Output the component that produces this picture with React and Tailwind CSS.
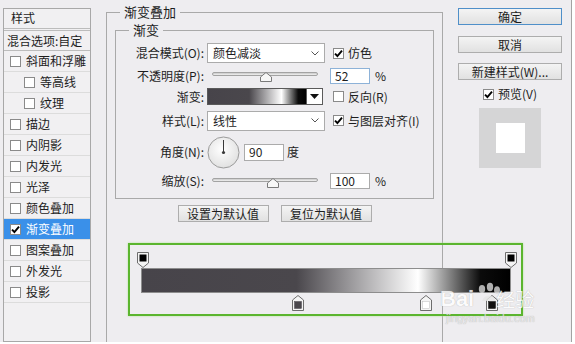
import React from "react";

const styleRows = [
  { name: "斜面和浮雕" },
  { name: "等高线", sub: true },
  { name: "纹理", sub: true },
  { name: "描边" },
  { name: "内阴影" },
  { name: "内发光" },
  { name: "光泽" },
  { name: "颜色叠加" },
  { name: "渐变叠加", checked: true, active: true },
  { name: "图案叠加" },
  { name: "外发光" },
  { name: "投影" },
];

const gradientBg =
  "bg-[linear-gradient(to_right,#47444a_0%,#4a474c_42%,#ffffff_75%,#0b0b0b_92%,#000000_100%)]";

function Box({ checked = false }) {
  return (
    <span className="inline-flex h-[11px] w-[11px] shrink-0 items-center justify-center border border-[#8a8a8a] bg-white">
      {checked && (
        <svg width="9" height="9" viewBox="0 0 9 9">
          <path d="M1 4.6 L3.4 7 L8 1.6" fill="none" stroke="#000" strokeWidth="1.9" />
        </svg>
      )}
    </span>
  );
}

function Check({ checked, label, className = "" }) {
  return (
    <div className={`flex items-center gap-[4px] whitespace-nowrap ${className}`}>
      <Box checked={checked} />
      <span className="leading-[14px]">{label}</span>
    </div>
  );
}

function Btn({ children, className = "", primary = false }) {
  return (
    <div
      className={`flex h-[17px] shrink-0 items-center justify-center whitespace-nowrap border bg-[linear-gradient(#f4f4f4,#e1e1e1)] leading-[15px] ${
        primary ? "border-[#4f8fc9]" : "border-[#adadad]"
      } ${className}`}
    >
      {children}
    </div>
  );
}

function Select({ value }) {
  return (
    <div className="flex h-[20px] w-[118px] shrink-0 items-center justify-between border border-[#ababab] bg-white pl-[5px] pr-[5px]">
      <span className="leading-[14px]">{value}</span>
      <svg width="8" height="5" viewBox="0 0 8 5">
        <path d="M0.5 0.5 L4 4 L7.5 0.5" fill="none" stroke="#555" strokeWidth="1" />
      </svg>
    </div>
  );
}

function Slider({ pos }) {
  return (
    <div className="relative h-[17px] w-[118px] shrink-0">
      <div className="ml-[5px] mt-[5px] h-[4px] w-[106px] rounded-full border border-[#a3a3a3] bg-[linear-gradient(#c9c9c9,#f2f2f2)]" />
      <svg className="absolute top-[5px]" style={{ left: pos - 6 }} width="12" height="10" viewBox="0 0 12 10">
        <path d="M6 0.5 L11.5 5 L11.5 9.5 L0.5 9.5 L0.5 5 Z" fill="#f7f7f7" stroke="#7a7a7a" strokeWidth="1" />
      </svg>
    </div>
  );
}

function Field({ value, focused = false, h = "h-[16px]" }) {
  return (
    <div
      className={`flex ${h} w-[40px] items-center border bg-white pl-[4px] leading-[14px] ${
        focused ? "border-[#8db2d8]" : "border-[#ababab]"
      }`}
    >
      {value}
    </div>
  );
}

function Row({ label, h, className = "", children }) {
  return (
    <div className={`flex items-center whitespace-nowrap ${h} ${className}`}>
      <div className="w-[88px] shrink-0 text-right leading-[14px]">{label}</div>
      <div className="ml-[3px] flex items-center">{children}</div>
    </div>
  );
}

function Stop({ left, top, down = false, color = "#000" }) {
  return (
    <svg className="absolute" style={{ left, top }} width="12" height="16" viewBox="0 0 12 16">
      {down ? (
        <>
          <path d="M0.5 0.5 H11.5 V11 L6 15.5 L0.5 11 Z" fill="#f4f4f4" stroke="#6d6d6d" />
          <rect x="2.5" y="2.5" width="7" height="7" fill={color} />
        </>
      ) : (
        <>
          <path d="M6 0.5 L11.5 5 V15.5 H0.5 V5 Z" fill="#f4f4f4" stroke="#6d6d6d" />
          <rect x="2.5" y="6.5" width="7" height="7" fill={color} stroke={color === "#fff" ? "#bbb" : color} strokeWidth="0.5" />
        </>
      )}
    </svg>
  );
}

export default function App() {
  return (
    <div className="relative h-[344px] w-[575px] overflow-hidden bg-white font-['Noto_Sans_CJK_SC',sans-serif] text-[12px] text-[#1d1d1d]">
      <div className="flex h-[342px] w-[572px] border-r border-[#a3a3a3] bg-[#eeedf0]">
        {/* style list */}
        <div className="ml-[3px] mt-[8px] flex h-[334px] w-[88px] shrink-0 flex-col whitespace-nowrap border border-[#a8a8a8] bg-[#f1f0f2]">
          <div className="h-[20px] border-b border-[#bcbcbc] pl-[7px] leading-[18px]">样式</div>
          <div className="mt-[1px] h-[21px] border-y border-[#bcbcbc] pl-[3px] leading-[19px]">混合选项:自定</div>
          {styleRows.map((r) => (
            <div
              key={r.name}
              className={`flex h-[21px] items-center gap-[5px] border-b border-[#dcdcdc] ${r.sub ? "pl-[20px]" : "pl-[6px]"} ${
                r.active ? "bg-[#3a90e9] text-white" : ""
              }`}
            >
              <Box checked={r.checked} />
              <span className="leading-[14px]">{r.name}</span>
            </div>
          ))}
        </div>

        {/* main settings */}
        <div className="ml-[15px] flex shrink-0 flex-col">
          <fieldset className="mt-[4px] h-[338px] w-[337px] min-w-0 border border-b-0 border-[#a9a9a9]">
            <legend className="ml-[13px] px-[4px] text-[13px] leading-[16px]">渐变叠加</legend>
            <fieldset className="ml-[8px] mt-[2px] w-[319px] min-w-0 border border-[#a9a9a9] pb-[9px] pt-[5px]">
              <legend className="ml-[13px] px-[4px] text-[13px] leading-[16px]">渐变</legend>
              <Row label="混合模式(O):" h="h-[20px]">
                <Select value="颜色减淡" />
                <Check checked label="仿色" className="ml-[8px]" />
              </Row>
              <Row label="不透明度(P):" h="h-[17px]" className="mt-[4px]">
                <Slider pos={59} />
                <div className="ml-[5px]">
                  <Field value="52" focused />
                </div>
                <span className="ml-[5px] leading-[14px]">%</span>
              </Row>
              <Row label="渐变:" h="h-[17px]" className="mt-[4px]">
                <div className={`h-[17px] w-[100px] shrink-0 border border-[#5a5a5a] ${gradientBg}`} />
                <div className="flex h-[17px] w-[16px] shrink-0 items-center justify-center border border-l-0 border-[#5a5a5a] bg-white">
                  <svg width="9" height="5" viewBox="0 0 9 5">
                    <path d="M0 0 H9 L4.5 5 Z" fill="#111" />
                  </svg>
                </div>
                <Check label="反向(R)" className="ml-[10px]" />
              </Row>
              <Row label="样式(L):" h="h-[21px]" className="mt-[5px]">
                <Select value="线性" />
                <Check checked label="与图层对齐(I)" className="ml-[8px]" />
              </Row>
              <Row label="角度(N):" h="h-[32px]" className="mt-[5px]">
                <svg width="33" height="33" viewBox="0 0 33 33">
                  <defs>
                    <radialGradient id="dial" cx="0.45" cy="0.4" r="0.7">
                      <stop offset="0" stopColor="#ffffff" />
                      <stop offset="1" stopColor="#dcdcdc" />
                    </radialGradient>
                  </defs>
                  <circle cx="16.5" cy="16.5" r="15.5" fill="url(#dial)" stroke="#9b9b9b" />
                  <line x1="16.5" y1="16.5" x2="16.5" y2="4" stroke="#3a3a3a" strokeWidth="1" />
                  <circle cx="16.5" cy="16.5" r="1.6" fill="#3a3a3a" />
                </svg>
                <div className="ml-[4px]">
                  <Field value="90" h="h-[17px]" />
                </div>
                <span className="ml-[3px] leading-[14px]">度</span>
              </Row>
              <Row label="缩放(S):" h="h-[16px]" className="mt-[5px]">
                <Slider pos={66} />
                <div className="ml-[5px]">
                  <Field value="100" />
                </div>
                <span className="ml-[5px] leading-[14px]">%</span>
              </Row>
            </fieldset>

            <div className="mt-[6px] flex justify-center gap-[12px]">
              <Btn className="w-[91px]">设置为默认值</Btn>
              <Btn className="w-[91px]">复位为默认值</Btn>
            </div>

            <div className="ml-[21px] mt-[21px] h-[73px] w-[395px] border-2 border-[#5bb52f] pl-[11px] shadow-[0_0_2px_#b5e39a]">
              <div className={`relative mt-[23px] h-[25px] w-[370px] border border-[#8d8d8d] ${gradientBg}`}>
                <Stop left={-5} top={-17} down />
                <Stop left={363} top={-17} down />
                <Stop left={150} top={26} color="#4a474c" />
                <Stop left={278} top={26} color="#fff" />
                <Stop left={344} top={26} color="#111" />
              </div>
            </div>
          </fieldset>
        </div>

        {/* buttons */}
        <div className="ml-[15px] mt-[8px] flex w-[104px] shrink-0 flex-col">
          <Btn primary>确定</Btn>
          <Btn className="mt-[11px]">取消</Btn>
          <Btn className="mt-[10px]">新建样式(W)...</Btn>
          <Check checked label="预览(V)" className="mt-[6px] h-[16px] justify-center" />
          <div className="ml-[21px] mt-[6px] flex h-[60px] w-[62px] items-center justify-center bg-[#d5d5d6]">
            <div className="h-[30px] w-[29px] bg-white" />
          </div>
        </div>
      </div>

      {/* site watermark */}
      <div className="pointer-events-none absolute left-[440px] top-[281px] text-white opacity-80">
        <svg className="absolute left-[36px] top-[0px]" width="26" height="22" viewBox="0 0 26 22">
          <ellipse cx="6" cy="8" rx="3.2" ry="4" fill="#d9d9d9" />
          <ellipse cx="14" cy="6" rx="3.2" ry="4.2" fill="#d9d9d9" />
          <ellipse cx="21" cy="9" rx="3" ry="3.8" fill="#d9d9d9" />
          <path d="M6 20 C8 13 18 13 20 20 Z" fill="#e6e6e6" />
        </svg>
        <div className="flex items-end">
          <span className="mt-[6px] font-['Liberation_Sans',sans-serif] text-[22px] font-bold leading-[24px] text-white [text-shadow:0_0_1px_#9a9a9a]">
            Bai
          </span>
          <span className="ml-[22px] text-[19px] leading-[24px] text-white [text-shadow:0_0_1px_#9a9a9a]">经验</span>
        </div>
        <div className="ml-[6px] mt-[1px] font-['Liberation_Sans',sans-serif] text-[11px] leading-[12px] text-[#e8e8e8] [text-shadow:0_0_1px_#9a9a9a]">
          jingyan.baidu.com
        </div>
      </div>
    </div>
  );
}
